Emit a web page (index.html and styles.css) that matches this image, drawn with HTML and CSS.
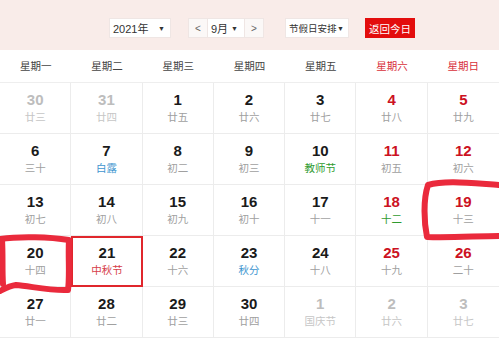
FILE: index.html
```html
<!DOCTYPE html>
<html lang="zh-CN">
<head>
<meta charset="utf-8">
<title>2021年9月 日历</title>
<link rel="stylesheet" href="styles.css">
</head>
<body>
<div class="page">
  <div class="toolbar">
    <div class="sel year"><span>2021年</span><span class="arr">▼</span></div>
    <div class="month-group">
      <span class="nav">&lt;</span>
      <div class="sel month"><span>9月</span><span class="arr">▼</span></div>
      <span class="nav">&gt;</span>
    </div>
    <div class="sel holiday"><span>节假日安排</span><span class="arr">▼</span></div>
    <div class="today-btn">返回今日</div>
  </div>
  <div class="weekdays">
    <div>星期一</div><div>星期二</div><div>星期三</div><div>星期四</div><div>星期五</div><div class="we">星期六</div><div class="we">星期日</div>
  </div>
  <div class="grid">
    <div class="cell other"><b>30</b><span>廿三</span></div>
    <div class="cell other"><b>31</b><span>廿四</span></div>
    <div class="cell"><b>1</b><span>廿五</span></div>
    <div class="cell"><b>2</b><span>廿六</span></div>
    <div class="cell"><b>3</b><span>廿七</span></div>
    <div class="cell red"><b>4</b><span>廿八</span></div>
    <div class="cell red"><b>5</b><span>廿九</span></div>

    <div class="cell"><b>6</b><span>三十</span></div>
    <div class="cell"><b>7</b><span class="term">白露</span></div>
    <div class="cell"><b>8</b><span>初二</span></div>
    <div class="cell"><b>9</b><span>初三</span></div>
    <div class="cell"><b>10</b><span class="fest">教师节</span></div>
    <div class="cell red"><b>11</b><span>初五</span></div>
    <div class="cell red"><b>12</b><span>初六</span></div>

    <div class="cell"><b>13</b><span>初七</span></div>
    <div class="cell"><b>14</b><span>初八</span></div>
    <div class="cell"><b>15</b><span>初九</span></div>
    <div class="cell"><b>16</b><span>初十</span></div>
    <div class="cell"><b>17</b><span>十一</span></div>
    <div class="cell red"><b>18</b><span class="fest">十二</span></div>
    <div class="cell red"><b>19</b><span>十三</span></div>

    <div class="cell"><b>20</b><span>十四</span></div>
    <div class="cell today"><b>21</b><span class="holi">中秋节</span></div>
    <div class="cell"><b>22</b><span>十六</span></div>
    <div class="cell"><b>23</b><span class="term">秋分</span></div>
    <div class="cell"><b>24</b><span>十八</span></div>
    <div class="cell red"><b>25</b><span>十九</span></div>
    <div class="cell red"><b>26</b><span>二十</span></div>

    <div class="cell"><b>27</b><span>廿一</span></div>
    <div class="cell"><b>28</b><span>廿二</span></div>
    <div class="cell"><b>29</b><span>廿三</span></div>
    <div class="cell"><b>30</b><span>廿四</span></div>
    <div class="cell other"><b>1</b><span>国庆节</span></div>
    <div class="cell other"><b>2</b><span>廿六</span></div>
    <div class="cell other"><b>3</b><span>廿七</span></div>
  </div>
  <svg class="marks" width="499" height="341" viewBox="0 0 499 341">
    <path d="M499 185 C470 183 445 180 428 185 C423 200 424 222 427 237 C450 238 478 236 499 236" />
    <path d="M0 239 C20 236 50 237 69 240 C68 256 70 275 68 290 C50 291 30 286 16 285 C9 286 4 289 0 291" />
    <path d="M2 240 C3 255 2 270 3 284" />
  </svg>
</div>
</body>
</html>
```
FILE: styles.css
```css
* { box-sizing: border-box; }
html, body { margin: 0; padding: 0; background: #fff; }
body {
  font-family: "Liberation Sans", "Noto Sans CJK SC", sans-serif;
  color: #333;
  width: 499px;
  height: 341px;
  overflow: hidden;
}
.page { position: relative; width: 499px; height: 341px; }

.toolbar {
  height: 50px;
  background: #f9ece9;
  display: flex;
  align-items: center;
  padding-left: 109px;
  padding-top: 7px;
  padding-bottom: 1px;
  font-size: 11px;
  white-space: nowrap;
}
.sel {
  height: 20px;
  background: #fff;
  border: 1px solid #efe6e4;
  display: flex;
  align-items: center;
  justify-content: space-between;
  padding: 0 5px 0 3px;
  color: #333;
}
.sel .arr { font-size: 7px; color: #333; }
.year { width: 62px; }
.month-group {
  margin-left: 17px;
  height: 20px;
  display: flex;
  border: 1px solid #efe6e4;
  background: #fff;
}
.month-group .nav {
  width: 18px;
  display: flex;
  align-items: center;
  justify-content: center;
  color: #666;
  font-size: 10px;
  background: #fbf8f7;
}
.month-group .month {
  width: 38px;
  height: 18px;
  border: none;
  border-left: 1px solid #efe6e4;
  border-right: 1px solid #efe6e4;
  padding: 0 6px 0 3px;
}
.holiday {
  width: 64px;
  margin-left: 21px;
  padding: 0 4px 0 3px;
  font-size: 9.5px;
}
.today-btn {
  margin-left: 16px;
  width: 50px;
  height: 20px;
  background: #e30d0d;
  color: #fff;
  display: flex;
  align-items: center;
  justify-content: center;
  font-size: 10.5px;
}

.weekdays {
  height: 33px;
  display: grid;
  grid-template-columns: repeat(7, 1fr);
  align-items: center;
  text-align: center;
  font-size: 10.5px;
  color: #444;
  border-bottom: 1px solid #eee;
  padding-bottom: 2px;
}
.weekdays .we { color: #d8303a; }

.grid {
  display: grid;
  grid-template-columns: repeat(7, 1fr);
  grid-auto-rows: 51px;
}
.cell {
  border-right: 1px solid #ececec;
  border-bottom: 1px solid #ececec;
  display: flex;
  flex-direction: column;
  align-items: center;
  justify-content: center;
  padding-bottom: 1px;
}
.cell:nth-child(7n) { border-right: none; }
.cell b {
  font-size: 15px;
  line-height: 18px;
  color: #1a1a1a;
  font-weight: bold;
}
.cell span {
  font-size: 10.5px;
  line-height: 16px;
  color: #a0a0a0;
  font-family: "Noto Sans CJK SC", sans-serif;
}
.cell.red b { color: #cc1122; }
.cell.other b { color: #bdbdbd; }
.cell.other span { color: #c6c6c6; }
.cell span.term { color: #3d95cf; }
.cell span.fest { color: #2f9b2f; }
.cell span.holi { color: #d6404a; }
.cell.today { border: 2px solid #e0262c; }

.marks {
  position: absolute;
  top: 0;
  left: 0;
  pointer-events: none;
}
.marks path {
  fill: none;
  stroke: #ea2a3c;
  stroke-width: 6;
  stroke-linecap: round;
  stroke-linejoin: round;
}
```
